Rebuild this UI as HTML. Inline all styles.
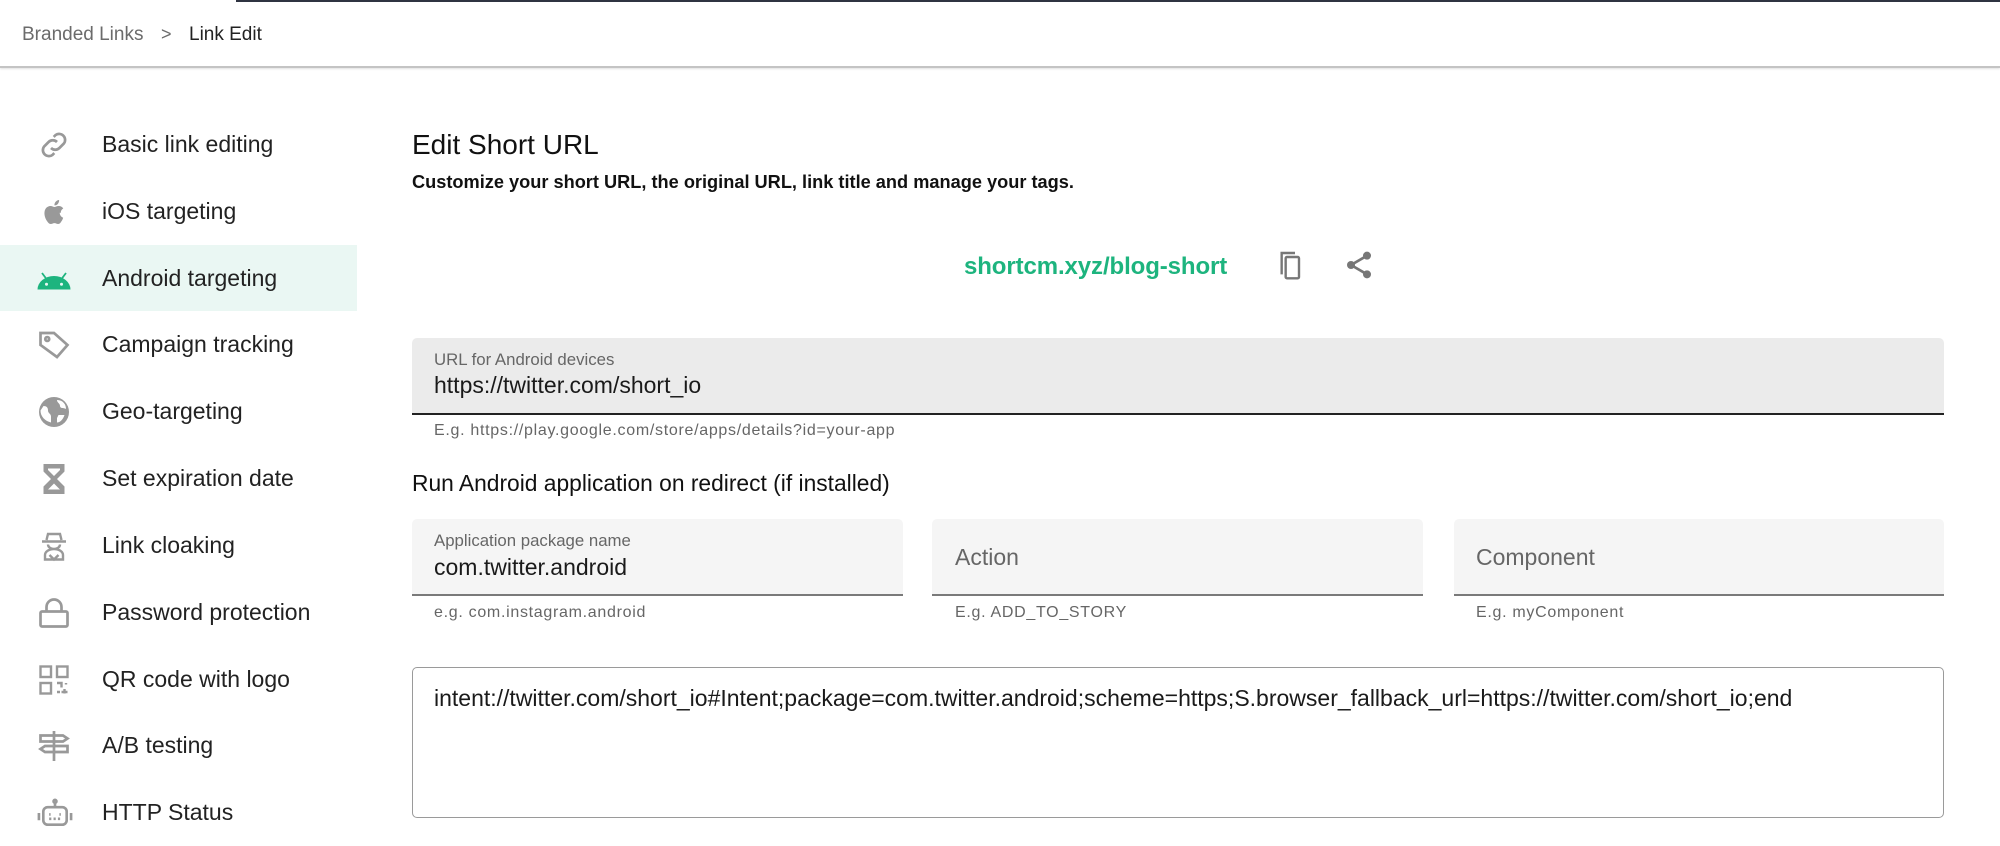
<!DOCTYPE html>
<html><head><meta charset="utf-8"><style>
*{margin:0;padding:0;box-sizing:border-box}
body{width:2000px;height:846px;overflow:hidden;background:#fff;font-family:"Liberation Sans",sans-serif;color:#1a1a1a;position:relative}
.abs{position:absolute;white-space:nowrap}
.topline{position:absolute;left:236px;top:0;width:1764px;height:2px;background:#2f3441}
.hdr{position:absolute;left:0;top:0;width:2000px;height:68px;border-bottom:2px solid #c4c4c4;box-shadow:0 1px 2px rgba(0,0,0,.12)}
.nav{position:absolute;left:0;width:357px;height:66px}
.nav svg{position:absolute;left:36px;top:16px}
.nav span{position:absolute;left:102px;top:20px;font-size:23px;color:#222}
.field{position:absolute;border-radius:5px 5px 0 0;border-bottom:2px solid #7a7a7a}
.lab{font-size:16.8px;color:#666}
.val{font-size:23px;color:#1a1a1a}
.help{font-size:16px;color:#666;letter-spacing:.7px}
</style></head><body>
<div class="hdr"></div>
<div class="topline"></div>
<div class="abs" style="left:22px;top:24px;font-size:19px;color:#6b6b6b">Branded Links</div>
<div class="abs" style="left:161px;top:24px;font-size:18px;color:#6b6b6b">&gt;</div>
<div class="abs" style="left:189px;top:24px;font-size:19px;color:#222">Link Edit</div>

<div class="nav" style="top:111px"><svg width="36" height="36" viewBox="0 0 24 24" fill="none" stroke="#999" stroke-width="1.8"><path d="M10 14a4 4 0 0 0 5.6 0l3-3a4 4 0 0 0-5.6-5.6l-1.2 1.2"/><path d="M14 10a4 4 0 0 0-5.6 0l-3 3a4 4 0 0 0 5.6 5.6l1.2-1.2"/></svg><span>Basic link editing</span></div>
<div class="nav" style="top:178px"><svg width="36" height="36" viewBox="0 0 24 24" fill="#999"><path d="M16.5 12.6c0-2 1.6-2.9 1.7-3-1-1.4-2.4-1.6-2.9-1.6-1.2-.1-2.4.7-3 .7s-1.6-.7-2.6-.7C8.3 8 7 8.8 6.3 10c-1.4 2.4-.4 6 1 8 .7 1 1.5 2 2.5 2s1.4-.6 2.5-.6 1.5.6 2.5.6 1.7-1 2.3-2c.7-1.1 1-2.1 1-2.2-.1 0-2.3-.9-2.3-3.3zM14.6 6.6c.5-.7.9-1.6.8-2.6-.8 0-1.8.5-2.3 1.2-.5.6-.9 1.5-.8 2.4.9.1 1.8-.4 2.3-1z"/></svg><span>iOS targeting</span></div>
<div class="nav" style="top:245px;background:#eaf7f3"><svg width="36" height="36" viewBox="0 0 24 24" fill="#1db47e"><path d="M1 19a11 9 0 0 1 22 0z"/><path d="M4 8l3 4M20 8l-3 4" stroke="#1db47e" stroke-width="1.2"/><circle cx="7" cy="15.5" r="1" fill="#eaf7f3"/><circle cx="17" cy="15.5" r="1" fill="#eaf7f3"/></svg><span>Android targeting</span></div>
<div class="nav" style="top:311px"><svg width="36" height="36" viewBox="0 0 24 24" fill="none" stroke="#999" stroke-width="1.8"><path d="M3 4h9l9 8-7 8-11-8z"/><circle cx="7.5" cy="8" r="1.3"/></svg><span>Campaign tracking</span></div>
<div class="nav" style="top:378px"><svg width="36" height="36" viewBox="0 0 24 24"><circle cx="12" cy="12" r="10" fill="#999"/><path d="M5 8c2 0 3 1 3 3s2 2 2 4v4c-4-1-7-4-7-8zM14 4c0 2 2 2 2 4s3 1 4 2c0-3-2-6-6-6zM15 14h4c-1 3-3 5-5 5v-3z" fill="#fff"/></svg><span>Geo-targeting</span></div>
<div class="nav" style="top:445px"><svg width="36" height="36" viewBox="0 0 24 24" fill="#999"><path d="M5 2h14v5l-5 5 5 5v5H5v-5l5-5-5-5z"/><path d="M8 5h8v1l-4 4-4-4zM8 19l4-4 4 4z" fill="#fff"/></svg><span>Set expiration date</span></div>
<div class="nav" style="top:512px"><svg width="36" height="36" viewBox="0 0 24 24" fill="none" stroke="#999" stroke-width="1.6"><path d="M7 8l1-4h8l1 4M4 9h16M8 11a4 3 0 0 0 8 0M6 21v-3a6 4 0 0 1 12 0v3zM9 18l3 3 3-3"/></svg><span>Link cloaking</span></div>
<div class="nav" style="top:579px"><svg width="36" height="36" viewBox="0 0 24 24" fill="none" stroke="#999" stroke-width="1.8"><rect x="3" y="11" width="18" height="10" rx="1"/><path d="M7 11V8a5 5 0 0 1 10 0v3"/></svg><span>Password protection</span></div>
<div class="nav" style="top:646px"><svg width="36" height="36" viewBox="0 0 24 24" fill="none" stroke="#999" stroke-width="1.6"><rect x="3" y="3" width="7" height="7"/><rect x="14" y="3" width="7" height="7"/><rect x="3" y="14" width="7" height="7"/><path d="M14 14h3v3M20 14v1M14 20h2M19 18v3M17 20h4"/></svg><span>QR code with logo</span></div>
<div class="nav" style="top:712px"><svg width="36" height="36" viewBox="0 0 24 24" fill="none" stroke="#999" stroke-width="1.8"><path d="M12 2v20M3 5h15l3 2-3 2H3zM21 12H6l-3 2 3 2h15z"/></svg><span>A/B testing</span></div>
<div class="nav" style="top:779px"><svg width="38" height="36" viewBox="0 0 26 24" fill="none" stroke="#999" stroke-width="1.8"><rect x="5" y="8" width="16" height="12" rx="3"/><path d="M13 8V5M2 12v5M24 12v5"/><circle cx="13" cy="4" r="1"/><path d="M9 13h1M16 13h1M9 16h8" stroke-dasharray="1.5 1.5"/></svg><span>HTTP Status</span></div>

<div class="abs" style="left:412px;top:129px;font-size:28px;color:#111">Edit Short URL</div>
<div class="abs" style="left:412px;top:172px;font-size:18.2px;font-weight:bold;color:#111">Customize your short URL, the original URL, link title and manage your tags.</div>
<div class="abs" style="left:964px;top:253px;font-size:24px;font-weight:bold;color:#1db47e;letter-spacing:-.1px">shortcm.xyz/blog-short</div>
<svg class="abs" style="left:1275px;top:248px" width="32" height="34" viewBox="0 0 24 24" fill="none" stroke="#777" stroke-width="1.8"><path d="M5 19V3h10"/><rect x="8" y="6" width="10" height="16" rx="1"/></svg>
<svg class="abs" style="left:1343px;top:249px" width="32" height="32" viewBox="0 0 24 24" fill="#777"><circle cx="18" cy="5" r="3"/><circle cx="6" cy="12" r="3"/><circle cx="18" cy="19" r="3"/><path d="M6 12L18 5M6 12l12 7" stroke="#777" stroke-width="2"/></svg>

<div class="field" style="left:412px;top:338px;width:1532px;height:77px;background:#ebebeb;border-bottom-color:#222"></div>
<div class="abs lab" style="left:434px;top:350px">URL for Android devices</div>
<div class="abs val" style="left:434px;top:372px">https://twitter.com/short_io</div>
<div class="abs help" style="left:434px;top:422px">E.g. https://play.google.com/store/apps/details?id=your-app</div>

<div class="abs" style="left:412px;top:470px;font-size:22.8px;color:#111">Run Android application on redirect (if installed)</div>

<div class="field" style="left:412px;top:519px;width:491px;height:77px;background:#f5f5f5"></div>
<div class="abs lab" style="left:434px;top:531px">Application package name</div>
<div class="abs val" style="left:434px;top:554px">com.twitter.android</div>
<div class="abs help" style="left:434px;top:604px">e.g. com.instagram.android</div>

<div class="field" style="left:932px;top:519px;width:491px;height:77px;background:#f5f5f5"></div>
<div class="abs val" style="left:955px;top:544px;color:#666">Action</div>
<div class="abs help" style="left:955px;top:604px">E.g. ADD_TO_STORY</div>

<div class="field" style="left:1454px;top:519px;width:490px;height:77px;background:#f5f5f5"></div>
<div class="abs val" style="left:1476px;top:544px;color:#666">Component</div>
<div class="abs help" style="left:1476px;top:604px">E.g. myComponent</div>

<div class="abs" style="left:412px;top:667px;width:1532px;height:151px;border:1.5px solid #9a9a9a;border-radius:5px"></div>
<div class="abs val" style="left:434px;top:685px;font-size:23px">intent://twitter.com/short_io#Intent;package=com.twitter.android;scheme=https;S.browser_fallback_url=https://twitter.com/short_io;end</div>
</body></html>
